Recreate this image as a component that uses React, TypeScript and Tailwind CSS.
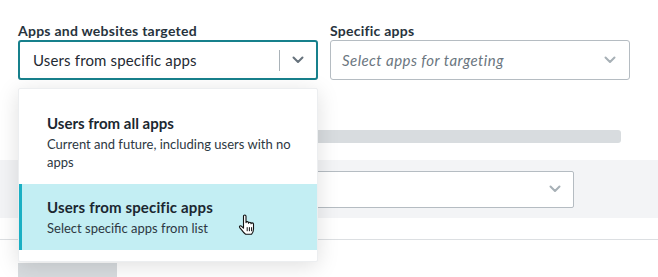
import React from "react";

function Chevron({ color, className }: { color: string; className?: string }) {
  return (
    <svg width="12" height="8" viewBox="0 0 12 8" className={className}>
      <path d="M1.5 1.5 L6 6 L10.5 1.5" fill="none" stroke={color} strokeWidth="2" strokeLinecap="round" strokeLinejoin="round" />
    </svg>
  );
}

function HandCursor() {
  return (
    <svg width="18" height="22" viewBox="0 0 18 22" className="absolute left-[216px] top-[30px]">
      <path
        d="M5.5 2.2 Q5.5 1 6.75 1 Q8 1 8 2.2 V8.6 Q8 7.6 9.25 7.6 Q10.5 7.6 10.5 8.6 V9.2 Q10.5 8.2 11.75 8.2 Q13 8.2 13 9.2 V9.8 Q13 8.9 14.25 8.9 Q15.5 8.9 15.5 9.9 V15 Q15.5 18 13.6 20.2 H7.6 Q6 19.2 4.2 16.6 L1.7 13.6 Q1.1 12.6 1.9 12 Q2.8 11.5 3.6 12.3 L5.5 14.2 Z"
        fill="#fff"
        stroke="#111"
        strokeWidth="1.1"
        strokeLinejoin="round"
      />
      <path d="M9.2 13.2 V17.2 M11.4 13.2 V17.2 M13.6 13.2 V17.2" stroke="#111" strokeWidth="1" />
    </svg>
  );
}

export default function App() {
  return (
    <div
      className="relative w-[658px] h-[277px] overflow-hidden bg-white"
      style={{ fontFamily: "Lato, 'Noto Sans', sans-serif" }}
    >
      {/* Top form row */}
      <div className="flex gap-[12px] pl-[18px] pt-[21px]">
        <div className="flex flex-col w-[300px]">
          <div className="text-[14px] leading-[19px] font-bold tracking-[0.25px] text-[#27333d]">Apps and websites targeted</div>
          <div className="flex items-center h-[40px] border-2 border-[#17808c] rounded-[3px] bg-white">
            <div className="flex-1 pl-[13px] text-[15px] tracking-[0.15px] text-[#1f2a33]">Users from specific apps</div>
            <div className="w-px h-[21px] bg-[#a9b2b8]" />
            <div className="w-[36px] flex justify-center">
              <Chevron color="#66727c" />
            </div>
          </div>
        </div>
        <div className="flex flex-col w-[300px]">
          <div className="text-[14px] leading-[19px] font-bold tracking-[0.25px] text-[#27333d]">Specific apps</div>
          <div className="flex items-center h-[40px] border border-[#b5bcc2] rounded-[3px] bg-white">
            <div className="flex-1 pl-[11px] text-[15px] italic tracking-[0.45px] text-[#6b7680]">Select apps for targeting</div>
            <div className="w-[38px] flex justify-center">
              <Chevron color="#a7b0b6" />
            </div>
          </div>
        </div>
      </div>

      {/* Background content */}
      <div className="ml-[18px] mt-[50px] w-[603px] h-[13px] rounded-[3px] bg-[#d8dcdf]" />
      <div className="mt-[17px] h-[58px] bg-[#f3f4f6] pl-[18px] flex items-center">
        <div className="w-[556px] h-[37px] border border-[#b5bcc2] rounded-[2px] bg-white flex items-center justify-end pr-[12px]">
          <Chevron color="#a7b0b6" />
        </div>
      </div>
      <div className="mt-[21px] border-t border-[#dcdfe2]" />
      <div className="ml-[18px] mt-[23px] w-[99px] h-[20px] bg-[#d8dcdf]" />

      {/* Dropdown menu overlay */}
      <div className="absolute left-[18px] top-[88px] w-[300px] bg-white border border-[#eceef0] rounded-[2px] py-[11px] shadow-[0_4px_22px_rgba(0,0,0,0.13)]">
        <div className="pl-[28px] pr-[26px] pt-[13px] pb-[13px]">
          <div className="text-[15px] leading-[20px] font-bold text-[#1b2730]">Users from all apps</div>
          <div className="mt-[2px] text-[13px] leading-[18px] text-[#2d3842]">
            Current and future, including users with no apps
          </div>
        </div>
        <div className="relative pl-[25px] pr-[26px] pt-[13px] pb-[13px] bg-[#c3eef3] border-l-[3px] border-[#1aafc3]">
          <div className="text-[15px] leading-[20px] font-bold tracking-[0.15px] text-[#1b2730]">Users from specific apps</div>
          <div className="mt-[2px] text-[13px] leading-[18px] text-[#2d3842]">Select specific apps from list</div>
          <HandCursor />
        </div>
      </div>
    </div>
  );
}
